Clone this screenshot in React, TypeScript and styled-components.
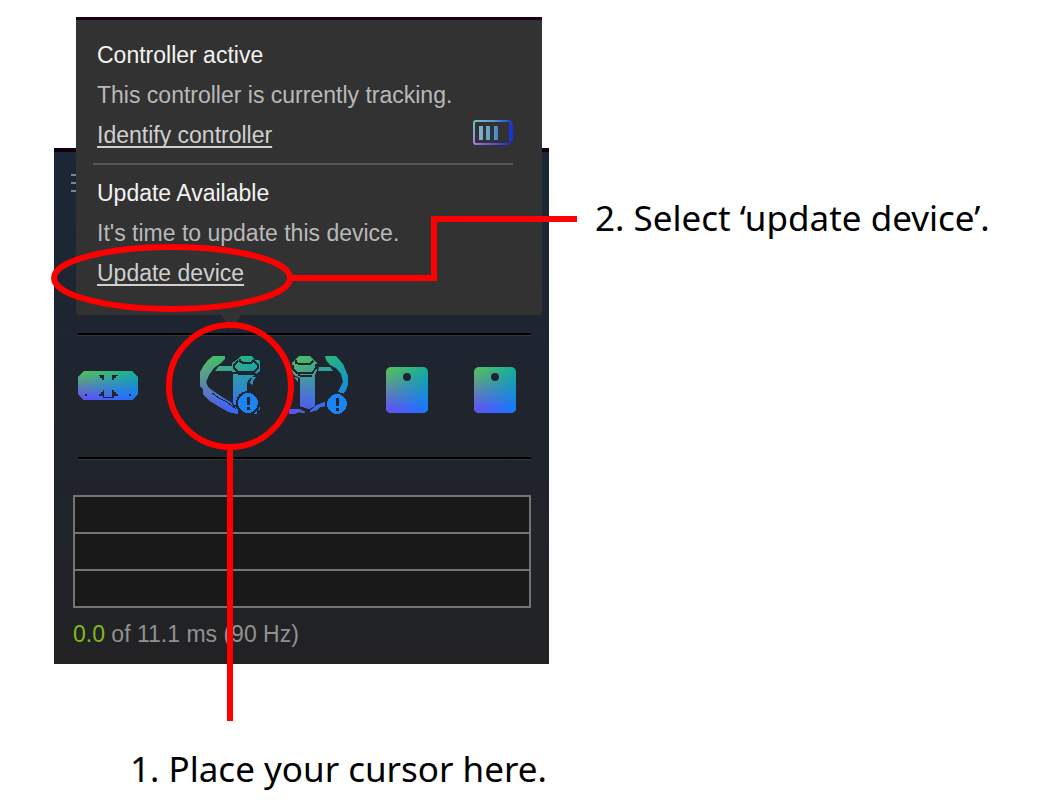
import React from "react";
import styled, { createGlobalStyle } from "styled-components";

const GlobalStyle = createGlobalStyle`
  * { box-sizing: border-box; }
  body {
    margin: 0;
    background: #ffffff;
    font-family: "Liberation Sans", Arial, sans-serif;
  }
`;

const Page = styled.main`
  padding: 17px 0 0 54px;
`;

const Figure = styled.div`
  position: relative;
  display: grid;
  grid-template-columns: minmax(0, 495px) 1fr;
  column-gap: 46px;
`;

const Caption = styled.p`
  margin: 0;
  color: #000000;
  font-family: "Noto Sans", "Open Sans", sans-serif;
  font-size: 35px;
  line-height: 48px;
  white-space: nowrap;
`;

const SelectCaption = styled(Caption)`
  padding-top: 177px;
`;

const CursorCaption = styled(Caption)`
  padding: 81px 0 0 76px;
`;

const StatusWindow = styled.section`
  position: relative;
  margin-top: 131px;
  padding-bottom: 10px;
  border-top: 4px solid #10000f;
  background: linear-gradient(180deg, #1b2736 0%, #1f2530 40%, #20242a 65%, #222224 100%);
`;

const Header = styled.header`
  height: 181px;
  padding: 22px 17px;
`;

const IconButton = styled.button`
  display: flex;
  justify-content: center;
  width: 100%;
  margin: 0;
  padding: 0;
  border: 0;
  background: none;
  cursor: pointer;
`;

const MenuButton = styled(IconButton)`
  width: 18px;
`;

const Divider = styled.hr`
  height: 3px;
  margin: 0 18px 0 24px;
  border: 0;
  border-bottom: 1px solid #34373b;
  background: #000000;
`;

const DeviceRow = styled.div`
  display: grid;
  grid-template-columns: 122px repeat(4, 88px);
  padding: 20px 0 43px 11px;
`;

const HeadsetSlot = styled.div`
  padding-right: 34px;
`;

const FrameGraph = styled.div`
  display: grid;
  grid-auto-rows: 35px;
  gap: 2px;
  margin: 35px 18px 6px 19px;
  padding: 2px;
  background: #747474;
`;

const GraphBand = styled.div`
  background: #191919;
`;

const Timing = styled.p`
  margin: 0 19px;
  color: #919191;
  font-size: 23px;
  line-height: 40px;
`;

const FrameTime = styled.span`
  color: #83b81a;
`;

const Tooltip = styled.aside`
  position: absolute;
  top: -135px;
  left: 22px;
  right: 7px;
  padding: 15px 29px 22px 17px;
  border-top: 3px solid #1c0014;
  border-radius: 0 0 3px 3px;
  background: #323232;

  &::after {
    content: "";
    position: absolute;
    top: 100%;
    left: 145px;
    border: 10px solid transparent;
    border-top: 15px solid #303234;
    border-bottom: 0;
  }
`;

const Line = styled.p<{ $strong?: boolean }>`
  display: flex;
  align-items: center;
  justify-content: space-between;
  margin: 0;
  padding-left: 4px;
  color: ${(p) => (p.$strong ? "#f2f2f2" : "#b9b9b9")};
  font-size: 23px;
  line-height: 40px;
  white-space: nowrap;
`;

const Action = styled.a`
  color: #cfcfcf;
  text-decoration: underline;
  text-decoration-thickness: 2px;
  text-underline-offset: 3px;
  text-decoration-skip-ink: none;
`;

const Separator = styled.hr`
  height: 2px;
  margin: 8px 0;
  border: 0;
  background: #565656;
`;

const BatteryArt = styled.svg`
  margin-bottom: 5px;
`;

const Annotations = styled.svg`
  position: absolute;
  top: 0;
  left: 0;
  overflow: visible;
  pointer-events: none;
`;

const INK = "#1f242d";

function DeviceGradient({ id }: { id: string }) {
  return (
    <defs>
      <linearGradient id={`${id}-top`} x1="0" y1="0" x2="1" y2="0">
        <stop offset="0" stopColor="#58c05a" />
        <stop offset="1" stopColor="#13ad9c" />
      </linearGradient>
      <linearGradient id={`${id}-bottom`} x1="0" y1="0" x2="1" y2="0">
        <stop offset="0" stopColor="#6450f4" />
        <stop offset="1" stopColor="#1778ff" />
      </linearGradient>
      <linearGradient id={`${id}-fade`} x1="0" y1="0" x2="0" y2="1">
        <stop offset="0.05" stopColor="#000" />
        <stop offset="0.92" stopColor="#fff" />
      </linearGradient>
      <mask id={`${id}-mask`} maskContentUnits="objectBoundingBox">
        <rect width="1" height="1" fill={`url(#${id}-fade)`} />
      </mask>
    </defs>
  );
}

/* A shape painted with the corner-to-corner green / teal / violet / blue blend. */
function Blend({ id, x, y, w, h, children }: {
  id: string; x: number; y: number; w: number; h: number; children: React.ReactNode;
}) {
  return (
    <>
      <DeviceGradient id={id} />
      <clipPath id={`${id}-clip`}>{children}</clipPath>
      <g clipPath={`url(#${id}-clip)`}>
        <rect x={x} y={y} width={w} height={h} fill={`url(#${id}-top)`} />
        <rect x={x} y={y} width={w} height={h} fill={`url(#${id}-bottom)`} mask={`url(#${id}-mask)`} />
      </g>
    </>
  );
}

function HeadsetIcon() {
  return (
    <svg width="62" height="58" viewBox="0 0 62 58" shapeRendering="crispEdges">
      <Blend id="hmd" x={0} y={15} w={62} h={29}>
        <path d="M6 15H54L60 21V38L54 44H6L0 38V21Z" />
      </Blend>
      <path
        d="M21 19H26V24H24V22H22V20H21ZM40 19H34V24H36V22H38V20H40ZM21 40V38H23V36H25V34H26V41H34V34H36V36H38V38H40V40H36V42H25V40ZM7 38H9V40H7ZM51 38H53V40H51Z"
        fill={INK}
      />
    </svg>
  );
}

function AlertBadge({ cx, cy }: { cx: number; cy: number }) {
  return (
    <g>
      <circle cx={cx} cy={cy} r="12" fill={INK} />
      <circle cx={cx} cy={cy} r="10" fill="#1a84f2" />
      <path d={`M${cx - 1} ${cy - 6}h3v8h-3zM${cx - 1} ${cy + 4}h3v3h-3z`} fill={INK} />
    </g>
  );
}

function LeftControllerIcon() {
  return (
    <svg width="62" height="58" viewBox="0 0 62 58" shapeRendering="crispEdges">
      <Blend id="left" x={0} y={0} w={62} h={58}>
        <path d="M13 0H25V3L21 7L14 12L9 19L6 26L8 31L13 35L22 41L33 48L38 54V58L29 56L20 51L10 45L3 38V33L0 30V16L4 9L8 4Z" />
        <path d="M19 10H32V15H15Z" />
        <path d="M38 3L41 0H52L55 4H59L60 6V15L56 18L52 21L48 26V49H32V7Z" />
        <path d="M51 21H56L53 25V29L50 27Z" />
        <path d="M48 53L60 51V54H57V58H53V56H48Z" />
      </Blend>
      <path
        d="M40 3V5L43 7H51L54 4M38 5L34 9V12L38 16H54L58 12V9L54 5M32 17H37L39 18H56M48 49V27L51 22"
        fill="none"
        stroke={INK}
        strokeWidth="2"
      />
      <path d="M12 37L19 42L27 46L36 53M32 18V47L35 51" fill="none" stroke={INK} strokeWidth="1" />
      <AlertBadge cx={48} cy={47} />
    </svg>
  );
}

function RightControllerIcon() {
  return (
    <svg width="62" height="58" viewBox="-2 0 62 58" shapeRendering="crispEdges">
      <Blend id="right" x={-2} y={0} w={62} h={58}>
        <path d="M6 3L9 0H20L23 3L27 7V14L25 19V50L19 53L10 50V22L4 19L2 15V7Z" />
        <path d="M4 21L8 22V26Z" />
        <path d="M29 11H40L43 15H28Z" />
        <path d="M35 0H46L53 8L56 15L58 20V28L56 34L53 38H47L50 32L53 26L51 18L46 12L40 9L36 4Z" />
        <path d="M-1 53H9L15 56V57L9 56L4 58H-1Z" />
        <path d="M20 55L27 49L35 46V50L30 51L27 54L20 56Z" />
      </Blend>
      <path
        d="M6 4V7L10 8H20L23 5M3 9V13L7 17H22L26 12V8M8 19L12 20H22M9 22V50"
        fill="none"
        stroke={INK}
        strokeWidth="2"
      />
      <AlertBadge cx={47} cy={48} />
    </svg>
  );
}

function BaseStationIcon({ id }: { id: string }) {
  return (
    <svg width="62" height="58" viewBox="0 0 62 58">
      <Blend id={id} x={10} y={11} w={42} h={46}>
        <rect x="10" y="11" width="42" height="46" rx="5" />
      </Blend>
      <circle cx="31" cy="21" r="4" fill={INK} />
    </svg>
  );
}

function BatteryIcon() {
  return (
    <BatteryArt width="40" height="26" viewBox="0 0 40 26" role="img" aria-label="Battery level">
      <defs>
        <linearGradient id="battery" x1="0" y1="0" x2="40" y2="0" gradientUnits="userSpaceOnUse">
          <stop offset="0" stopColor="#8fb8cb" />
          <stop offset="0.5" stopColor="#5a9dc8" />
          <stop offset="1" stopColor="#1436df" />
        </linearGradient>
        <linearGradient id="battery-left" x1="0" y1="0" x2="0" y2="26" gradientUnits="userSpaceOnUse">
          <stop offset="0" stopColor="#62c6a4" />
          <stop offset="0.5" stopColor="#8c9fd4" />
          <stop offset="1" stopColor="#b273e0" />
        </linearGradient>
        <linearGradient id="battery-base" x1="0" y1="0" x2="38" y2="0" gradientUnits="userSpaceOnUse">
          <stop offset="0" stopColor="#b273e0" />
          <stop offset="1" stopColor="#1d2bdd" />
        </linearGradient>
      </defs>
      <path d="M3 1H35Q38 1 38 4V21" fill="none" stroke="url(#battery)" strokeWidth="2" />
      <path d="M4 1H3Q1 1 1 3V22Q1 24 3 24" fill="none" stroke="url(#battery-left)" strokeWidth="2" />
      <path d="M3 23H35L38 20V22L36 25H3Z" fill="url(#battery-base)" />
      <rect x="36" y="5" width="4" height="15" fill="#1436df" />
      <path d="M6 6H10V20H6ZM13 6H17V20H13ZM21 6H25V20H21Z" fill="url(#battery)" />
    </BatteryArt>
  );
}

export default function App() {
  return (
    <Page>
      <GlobalStyle />
      <Figure>
        <StatusWindow aria-label="Device status">
          <Header>
            <MenuButton type="button" aria-label="Menu">
              <svg width="18" height="18" viewBox="0 0 18 18">
                <path d="M0 1H18M0 9H18M0 17H18" stroke="#7b848c" strokeWidth="2" />
              </svg>
            </MenuButton>
          </Header>
          <Divider />
          <DeviceRow>
            <HeadsetSlot>
              <IconButton type="button" aria-label="Headset"><HeadsetIcon /></IconButton>
            </HeadsetSlot>
            <IconButton type="button" aria-label="Left controller, update available"><LeftControllerIcon /></IconButton>
            <IconButton type="button" aria-label="Right controller, update available"><RightControllerIcon /></IconButton>
            <IconButton type="button" aria-label="Base station 1"><BaseStationIcon id="base1" /></IconButton>
            <IconButton type="button" aria-label="Base station 2"><BaseStationIcon id="base2" /></IconButton>
          </DeviceRow>
          <Divider />
          <FrameGraph>
            <GraphBand />
            <GraphBand />
            <GraphBand />
          </FrameGraph>
          <Timing><FrameTime>0.0</FrameTime> of 11.1 ms (90 Hz)</Timing>
          <Tooltip>
            <Line $strong>Controller active</Line>
            <Line>This controller is currently tracking.</Line>
            <Line>
              <Action href="#identify">Identify controller</Action>
              <BatteryIcon />
            </Line>
            <Separator />
            <Line $strong>Update Available</Line>
            <Line>It's time to update this device.</Line>
            <Line><Action href="#update">Update device</Action></Line>
          </Tooltip>
        </StatusWindow>
        <SelectCaption>2. Select ‘update device’.</SelectCaption>
        <Annotations width="524" height="705" viewBox="0 0 524 705" aria-hidden="true">
          <g fill="none" stroke="#fe0000" strokeWidth="6">
            <ellipse cx="118" cy="261" rx="118" ry="31" />
            <path d="M237 261H380V202H523" />
            <circle cx="176" cy="369" r="61" />
            <path d="M176 430V704" />
          </g>
        </Annotations>
      </Figure>
      <CursorCaption>1. Place your cursor here.</CursorCaption>
    </Page>
  );
}
